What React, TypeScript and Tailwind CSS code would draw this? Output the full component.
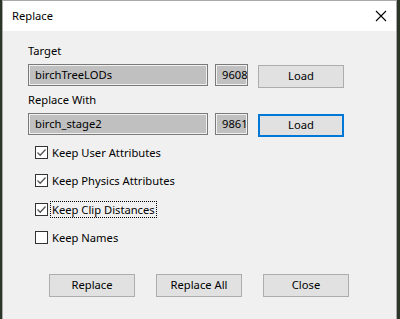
import { useState } from "react";

const font = { fontFamily: '"Noto Sans", "Open Sans", sans-serif' };

function Field({ value, w }: { value: string; w: string }) {
  return (
    <div className={`${w} h-[22px] border border-[#7a7a7a] bg-[#c0c0c0] shadow-[inset_0_0_0_1px_#f0f0f0] overflow-hidden flex items-center pl-[6px] text-[11.2px] text-black whitespace-nowrap`}>
      {value}
    </div>
  );
}

function Btn({ label, focused }: { label: string; focused?: boolean }) {
  return (
    <button
      className={`w-[86px] h-[23px] bg-[#e1e1e1] text-[11.2px] text-black flex items-center justify-center ${
        focused ? "border-2 border-[#0078d7]" : "border border-[#adadad]"
      }`}
    >
      {label}
    </button>
  );
}

function Check({ label, checked, focus }: { label: string; checked: boolean; focus?: boolean }) {
  return (
    <div className="flex items-center h-[16px] pl-[32px]">
      <div className="w-[13px] h-[13px] border border-[#333] bg-white flex items-center justify-center">
        {checked && (
          <svg width="11" height="11" viewBox="0 0 11 11">
            <path d="M1.5 5.5 L4.2 8.2 L9.5 2.5" stroke="#555" strokeWidth="1.3" fill="none" />
          </svg>
        )}
      </div>
      <span className={`ml-[3px] px-[1px] text-[11.2px] text-black leading-[15px] ${focus ? "outline-1 outline-dotted outline-black" : ""}`}>
        {label}
      </span>
    </div>
  );
}

export default function App() {
  const [opts] = useState([
    { label: "Keep User Attributes", checked: true },
    { label: "Keep Physics Attributes", checked: true },
    { label: "Keep Clip Distances", checked: true, focus: true },
    { label: "Keep Names", checked: false },
  ]);

  return (
    <div className="w-[400px] h-[319px] bg-[#2c3628] flex" style={font}>
      <div className="ml-[2px] w-[395px] h-[319px] border-t border-l border-r border-[#a9a9a9] bg-[#f0f0f0] flex flex-col">
        <div className="h-[30px] bg-white flex items-center justify-between pl-[9px] pr-[9px]">
          <span className="text-[11.2px] text-black">Replace</span>
          <svg width="12" height="12" viewBox="0 0 12 12">
            <path d="M1 1 L11 11 M11 1 L1 11" stroke="#000" strokeWidth="1.1" />
          </svg>
        </div>

        <div className="flex flex-col pl-[25px]">
          <div className="mt-[12px] h-[16px] text-[11.2px] leading-[16px] text-black">Target</div>
          <div className="mt-[5px] flex items-start">
            <Field value="birchTreeLODs" w="w-[180px]" />
            <div className="ml-[7px]">
              <Field value="9608" w="w-[33px]" />
            </div>
            <div className="ml-[10px] mt-[1px]">
              <Btn label="Load" />
            </div>
          </div>

          <div className="mt-[4px] h-[16px] text-[11.2px] leading-[16px] text-black">Replace With</div>
          <div className="mt-[5px] flex items-start">
            <Field value="birch_stage2" w="w-[180px]" />
            <div className="ml-[7px]">
              <Field value="9861" w="w-[33px]" />
            </div>
            <div className="ml-[10px] mt-[1px]">
              <Btn label="Load" focused />
            </div>
          </div>

          <div className="mt-[7px] flex flex-col gap-[12.5px] -ml-[25px]">
            {opts.map((o) => (
              <Check key={o.label} label={o.label} checked={o.checked} focus={o.focus} />
            ))}
          </div>

          <div className="mt-[28px] flex gap-[21px] pl-[46px] -ml-[25px]">
            <Btn label="Replace" />
            <Btn label="Replace All" />
            <Btn label="Close" />
          </div>
        </div>
      </div>
    </div>
  );
}
